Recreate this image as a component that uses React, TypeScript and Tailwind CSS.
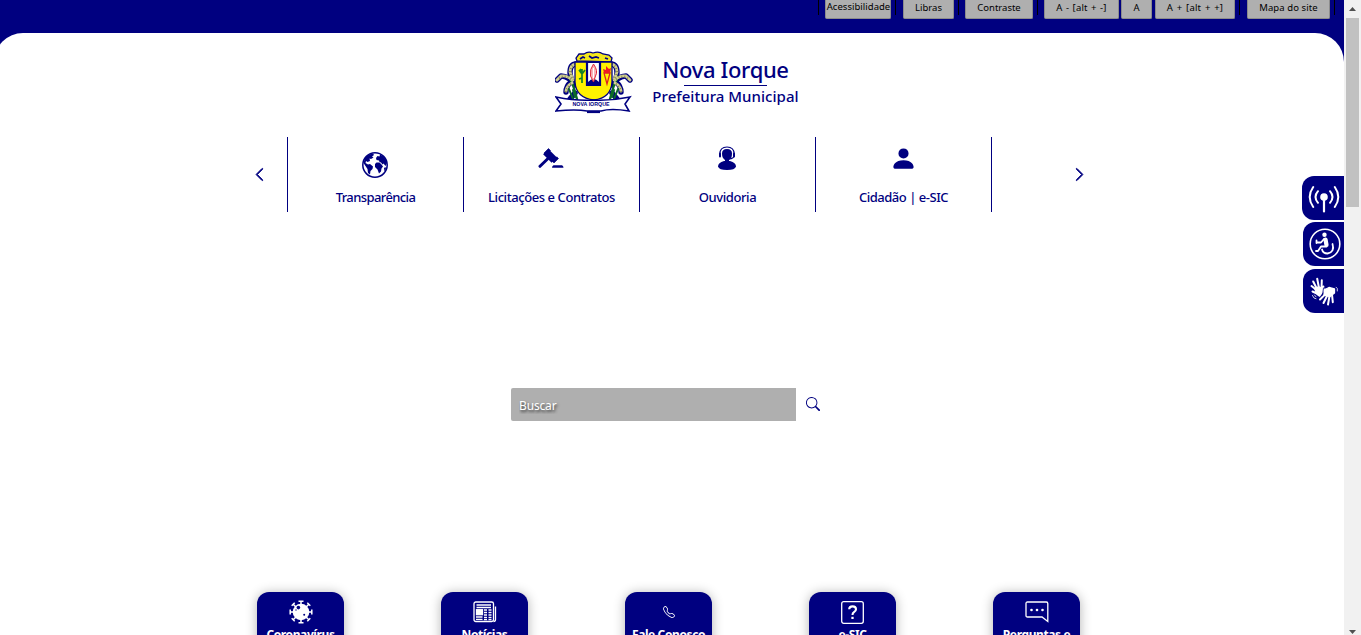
import type { ReactNode } from "react";
import { BsChevronLeft, BsChevronRight, BsPersonFill, BsSearch, BsTelephone } from "react-icons/bs";

function Divider({ className = "" }: { className?: string }) {
  return <span className={`h-[15px] w-px shrink-0 bg-black ${className}`} />;
}

function TopButton({ className, children }: { className: string; children: ReactNode }) {
  return (
    <button
      className={`flex h-[19px] shrink-0 justify-center whitespace-nowrap rounded-b-[2px] border border-t-0 border-[#8c8c8c] bg-[#afafaf] text-[9.5px] leading-[14px] text-black ${className}`}
    >
      {children}
    </button>
  );
}

function CornStalk() {
  return (
    <g strokeLinecap="round" strokeLinejoin="round" fill="none">
      <path d="M21 13Q15 13 15 22Q16 30 20 34M20 34Q14 25 6 25L2 29M16 31Q11 35 11 41M20 42L15 48" stroke="#000080" strokeWidth="5.4" />
      <path d="M14 26L18 34L22 48" stroke="#0c6b26" strokeWidth="2.4" />
      <path d="M21 13Q15 14 15 21L18 29M17 29Q12 24 6 25L2 29M17 32Q12 34 11 40" stroke="#d0cf91" strokeWidth="2.9" />
      <path d="M20 13Q16 15 15 21L18 29M16 28Q11 24 4 27M16 33Q12 36 11 41" stroke="#77763f" strokeWidth="2.6" strokeDasharray="0.7 2.3" strokeLinecap="butt" />
      <path d="M14 38L18 48M18 39L20 46" stroke="#0c6b26" strokeWidth="2" />
    </g>
  );
}

function Crest() {
  return (
    <svg width="78" height="64" viewBox="0 0 78 64" className="shrink-0">
      <CornStalk />
      <g transform="translate(77 0) scale(-1 1)">
        <CornStalk />
      </g>
      <path d="M22 10L21 7L24 3L29 3Q33 0 38 2Q44 0 48 3L54 4L57 7L56 11Z" fill="#f2e61c" stroke="#000080" strokeWidth="1.3" />
      <path d="M25 8l3-2 2 1M34 5l3 2 4-1 3 1M50 7l3 1" fill="none" stroke="#000080" strokeWidth="1.7" />
      <path d="M20 11H57V31Q56 47 39 49Q21 47 20 31Z" fill="#fff200" stroke="#000080" strokeWidth="1.3" />
      <path d="M32 11H45V34H32Z" fill="#fff" stroke="#000080" strokeWidth="2.2" />
      <path d="M33 31Q38.500 25 44 31V34H33Z" fill="#000080" />
      <path d="M38.500 13q5 7 2 12l-2 6-3-6q-1-7 3-12Z" fill="#f8b4b8" stroke="#e0283c" strokeWidth="1" />
      <path d="M38.500 17v10" stroke="#fff" />
      <path d="M27 18v14M27 23l-3-4M27 23l3-4M27 21l-2-3M27 27l-3 1" stroke="#168326" strokeWidth="1.7" />
      <path d="M49 22h6l-3 11Z" fill="#fff200" stroke="#d22" strokeWidth="1.3" />
      <path d="M49 22l-1-4 3 1 0-4 3 3 2-1-1 5Z" fill="#ed1c24" />
      <path d="M1 46Q21 50 38 49Q56 50 75 46L70 53L74 60Q56 57 46 60H32Q21 58 1 60L6 53Z" fill="#fff" stroke="#000080" strokeWidth="1.6" />
      <path d="M32 61h13" stroke="#000080" strokeWidth="2.2" />
      <text x="36" y="55" textAnchor="middle" fontFamily="Liberation Sans, sans-serif" fontSize="5.500" fontWeight="700" fill="#000080" textLength="37" lengthAdjust="spacingAndGlyphs">NOVA IORQUE</text>
    </svg>
  );
}

function GlobeIcon() {
  return (
    <svg width="28" height="28" viewBox="0 0 28 28" fill="#000080">
      <circle cx="14" cy="14" r="12.200" fill="none" stroke="#000080" strokeWidth="1.500" />
      <path d="M4 7Q7 3 12 2.500L13 4 11 5.500 12.500 6.500 10 8 8.500 7.500 9 10 6.500 11 5 10 4.500 12 7 13.500 9 13 12 15.500 11.500 18 9.500 20 9 23.500 7 22 6.500 18 4.500 15 2.500 12Z" />
      <path d="M15 7L16.500 5 18.500 5.500 19 3.500Q25 6 26 12L24.500 15 22.500 12.500 21.500 13.500 20 11.500 18.500 11 18 9.500 15.500 9Z" />
      <path d="M15.500 11.500L18.500 11.500 20.500 13.500 22 15.500 20.500 17.500 20 20.500 18 22.500 16.500 18.500 14 16 14 13Z" />
      <path d="M23 17l1.500-1 .5 2-1.500 2.500Z" />
    </svg>
  );
}

function GavelIcon() {
  return (
    <svg width="26" height="22" viewBox="0 0 26 22" fill="#000080">
      <rect x="6" y="4.2" width="12" height="7.4" transform="rotate(45 12 7.9)" />
      <path d="M10.5 .5L6 5L8 7L12.5 2.5ZM18.8 8.8L14.3 13.3L16 15L20.5 10.5Z" stroke="#000080" strokeWidth=".6" strokeLinejoin="round" />
      <path d="M9.5 11L2 18.3" stroke="#000080" strokeWidth="3" strokeLinecap="round" />
      <path d="M15.5 17.2h8.5q1.5 .5 1.5 2.5H14q0-2 1.5-2.5Z" />
    </svg>
  );
}

function AgentIcon() {
  return (
    <svg width="20" height="24" viewBox="0 0 20 24" fill="#000080">
      <path d="M5 7.5Q5 3 10 3T15 7.5Q15 12.5 12 14V17H8V14Q5 12 5 7.5Z" />
      <path d="M2.8 8Q3 1 10 1T17.2 8V9.5Q17 12.6 12 13" fill="none" stroke="#000080" strokeWidth="1.2" />
      <rect x="2" y="6.5" width="2" height="5" rx="1" />
      <rect x="16" y="6.5" width="2" height="5" rx="1" />
      <path d="M7 15h6q6 1.5 6 5.5Q18 24 10 24T1 20.5Q1 16.500 7 15Z" />
    </svg>
  );
}

function BroadcastIcon() {
  return (
    <svg width="32" height="30" viewBox="0 0 32 30" fill="none" stroke="white" strokeWidth="2" strokeLinecap="round">
      <circle cx="16" cy="13" r="3.8" fill="white" stroke="none" />
      <path d="M16 14v13.5" strokeWidth="2.2" />
      <path d="M10 7.2q-5 5.8 0 11.6M22 7.2q5 5.8 0 11.6M5.2 3q-7 10 0 20M26.8 3q7 10 0 20" />
    </svg>
  );
}

function WheelchairIcon() {
  return (
    <svg width="32" height="32" viewBox="0 0 32 32" fill="none" stroke="white" strokeLinecap="round" strokeLinejoin="round">
      <circle cx="16" cy="16" r="14.8" strokeWidth="1.6" />
      <circle cx="15.5" cy="6.8" r="2.2" fill="white" stroke="none" />
      <path d="M16.5 11.5L17.5 17" strokeWidth="4.2" />
      <path d="M15 11L12 14.5H7.5M7.5 12.5v2.5M17.5 18.5L12 18.5L9 23H7" strokeWidth="1.8" />
      <path d="M23.5 16Q26 24 18.5 25.5Q14 25.5 13 21.5" strokeWidth="1.8" />
    </svg>
  );
}

function SignHandsIcon() {
  return (
    <svg width="29" height="29" viewBox="0 0 29 29" fill="none" stroke="white" strokeLinecap="round" strokeLinejoin="round">
      <path d="M5 12L8 10L12 11L13 14L9.5 19Q7 18 6 15Z" fill="white" strokeWidth="1.5" />
      <path d="M6.500 13L1.500 9M7 12L3.200 4.500M9 11L7.200 1.800M11.500 12L11.800 3.200M12.200 14.500L13.400 9.500M8 17L2.500 14.500" strokeWidth="2" />
      <path d="M14 13L19 10.500L24.500 12V16L20 19.500L14 18Z" fill="white" strokeWidth="1.3" />
      <path d="M15 12.500L10.500 13.300M15.500 17L10 22.500M17 19L13.500 26M19.500 19L18 27.500M22 17.500L22.800 25.200" strokeWidth="2" />
      <path d="M2.500 18.500l1.500 2.500 2 .7M4.500 18l1.500 1.800M26 10.200l1.300 1.300v2.500" strokeWidth=".8" />
      <path d="M13.500 11L12.500 18" stroke="#000080" strokeWidth=".8" />
    </svg>
  );
}

function VirusIcon() {
  return (
    <svg width="24" height="24" viewBox="0 0 24 24" fill="none" stroke="white" strokeWidth="1.5">
      <circle cx="12" cy="12" r="8.3" fill="white" stroke="none" />
      <path d="M12 1v22M9.5 1.2h5M9.5 22.8h5M1 12h22M1.2 9.5v5M22.8 9.5v5" />
      <path d="M4.2 4.2l15.6 15.6M2.7 5.8l3-3M18.3 21.3l3-3M19.8 4.2L4.2 19.8M18.3 2.7l3 3M2.7 18.3l3 3" />
      <circle cx="9.4" cy="7.6" r="1.8" fill="#000080" stroke="none" />
      <circle cx="7" cy="10" r=".7" fill="#000080" stroke="none" />
      <circle cx="15.2" cy="14.8" r="1" fill="#000080" stroke="none" />
    </svg>
  );
}

function NewsIcon() {
  return (
    <svg width="24" height="22" viewBox="0 0 24 22" fill="none" stroke="white" strokeWidth="1.3">
      <rect x="1" y="1" width="19.5" height="19.5" rx="1.8" />
      <path d="M22.5 5.5v13q0 2-2 2M3.5 4h14.5M3.5 6.5h14.5" />
      <rect x="3.5" y="8.7" width="6" height="5" fill="white" />
      <path d="M11 9h3M15.5 9h3M11 11.5h3M15.5 11.5h3M11 14h3M15.5 14h3M3 16h6.5M11 16.3h3M15.5 16.3h3M3 18.3h6.5M11 18.5h3M15.5 18.5h3" />
    </svg>
  );
}

function QuestionIcon() {
  return (
    <svg width="23" height="23" viewBox="0 0 23 23" fill="none" stroke="white">
      <rect x=".7" y=".7" width="21.6" height="21.6" rx="2" strokeWidth="1.3" />
      <path d="M8.2 8.3Q8.2 5.4 11.6 5.4Q15 5.4 15 8.3Q15 10 13 11.2Q11.5 12.2 11.5 14" strokeWidth="2.1" />
      <path d="M11.5 15.8v2.2" strokeWidth="2.3" />
    </svg>
  );
}

function ChatIcon() {
  return (
    <svg width="24" height="22" viewBox="0 0 24 22" fill="none" stroke="white" strokeWidth="1.3">
      <path d="M2.5 1h18.8Q22.8 1 22.8 2.5v18L17 16H2.5Q1 16 1 14.5v-12Q1 1 2.5 1Z" />
      <g fill="white" stroke="none">
        <circle cx="6.5" cy="9" r="1.3" />
        <circle cx="12" cy="9" r="1.3" />
        <circle cx="17.5" cy="9" r="1.3" />
      </g>
    </svg>
  );
}

const services = [
  { label: "Transparência", icon: <GlobeIcon />, pad: "pt-[14px]", tracking: "tracking-[-0.6px]" },
  { label: "Licitações e Contratos", icon: <GavelIcon />, pad: "pt-[11px]", tracking: "tracking-[-0.43px]" },
  { label: "Ouvidoria", icon: <AgentIcon />, pad: "pt-[9px]", tracking: "tracking-[-0.42px]" },
  { label: "Cidadão | e-SIC", icon: <BsPersonFill size={27} />, pad: "pt-[8px]", tracking: "tracking-[-0.47px]" },
];

const cards = [
  { label: "Coronavírus", icon: <VirusIcon /> },
  { label: "Notícias", icon: <NewsIcon /> },
  { label: "Fale Conosco", icon: <BsTelephone size={12} /> },
  { label: "e-SIC", icon: <QuestionIcon /> },
  { label: "Perguntas e", icon: <ChatIcon /> },
];

export default function App() {
  return (
    <div className="relative flex h-[635px] w-[1361px] overflow-hidden bg-[#000080] font-['Noto_Sans','Open_Sans',sans-serif] text-[#000080]">
      <div className="w-[1344px] shrink-0">
        <header className="flex h-[33px] items-start pl-[818px]">
          <Divider />
          <TopButton className="ml-[6px] w-[66px] pl-px leading-[10px] tracking-[0.03px]">Acessibilidade</TopButton>
          <Divider className="ml-[4px]" />
          <TopButton className="ml-[7px] w-[51px] pt-px">Libras</TopButton>
          <Divider className="ml-[4px]" />
          <TopButton className="ml-[6px] w-[68px] pt-px">Contraste</TopButton>
          <Divider className="ml-[4px]" />
          <TopButton className="ml-[6px] w-[75px] pt-px tracking-[0.2px] [word-spacing:0.7px]">A - [alt + -]</TopButton>
          <TopButton className="ml-[2px] w-[31px] pt-px">A</TopButton>
          <TopButton className="ml-[3px] w-[80px] pt-px tracking-[0.2px] [word-spacing:1px]">A + [alt + +]</TopButton>
          <Divider className="ml-[4px]" />
          <TopButton className="ml-[7px] w-[83px] pt-px tracking-[0.1px]">Mapa do site</TopButton>
          <Divider className="ml-[4px]" />
        </header>

        <main className="-ml-[6px] h-[602px] rounded-t-[29px] bg-white pl-[6px]">
          <div className="flex h-[104px] pl-[555px] pt-[18px]">
            <Crest />
            <div className="ml-[18px] flex w-[149px] flex-col items-center pt-[4px]">
              <h1 className="-mt-px h-[31px] whitespace-nowrap text-[22px] font-medium leading-[30px] tracking-[-0.35px]">Nova Iorque</h1>
              <div className="h-px w-[83px] shrink-0 bg-[#000080]" />
              <h2 className="-mt-px whitespace-nowrap text-[15px] font-medium leading-[22px] tracking-[0.04px]">Prefeitura Municipal</h2>
            </div>
          </div>

          <nav className="flex h-[75px]">
            <button className="flex w-[287px] items-center justify-end pr-[20px]">
              <BsChevronLeft size={15} strokeWidth={1} />
            </button>
            {services.map((s) => (
              <a key={s.label} className={`flex h-[75px] w-[176px] flex-col items-center border-l border-[#000080] ${s.pad}`}>
                <div className="flex flex-1 items-start pr-px">{s.icon}</div>
                <span className={`mb-[5px] whitespace-nowrap text-[13px] font-medium leading-[19px] ${s.tracking}`}>{s.label}</span>
              </a>
            ))}
            <button className="flex w-[100px] items-center justify-end border-l border-[#000080] pr-[4px]">
              <BsChevronRight size={15} strokeWidth={1} />
            </button>
          </nav>

          <div className="mt-[176px] flex h-[33px] items-center pl-[511px]">
            <input
              className="h-[33px] w-[285px] rounded-l-[2px] bg-[#afafaf] px-[8px] pt-[2px] text-[12px] tracking-[-0.15px] text-white outline-none [text-shadow:1px_2px_3px_#333] placeholder:text-white"
              placeholder="Buscar"
            />
            <button className="ml-[10px] pb-px">
              <BsSearch size={14} />
            </button>
          </div>

          <div className="mt-[171px] flex gap-[97px] pl-[257px]">
            {cards.map((c) => (
              <a key={c.label} className="flex h-[87px] w-[87px] flex-col items-center rounded-[12px] bg-[#000080] text-white shadow-[0_1px_12px_rgba(0,0,0,.3)]">
                <div className="flex h-[40px] w-full shrink-0 items-center justify-center">{c.icon}</div>
                <span className="-mt-[6px] whitespace-nowrap text-[12px] font-bold leading-[17px] tracking-[-0.4px]">{c.label}</span>
              </a>
            ))}
          </div>
        </main>
      </div>

      <aside className="absolute left-[1302px] top-[176px] flex w-[42px] flex-col items-end">
        <a className="flex h-[44px] w-[42px] items-center justify-center rounded-l-[12px] bg-[#000080] pl-[2px] pt-[2px]">
          <BroadcastIcon />
        </a>
        <a className="mt-[2px] flex h-[44px] w-[41px] items-center justify-center rounded-l-[12px] bg-[#000080] pl-[2px]">
          <WheelchairIcon />
        </a>
        <a className="mt-[3px] flex h-[44px] w-[41px] items-center justify-center rounded-l-[12px] bg-[#000080] pl-[2px]">
          <SignHandsIcon />
        </a>
      </aside>

      <div className="flex h-[635px] w-[17px] shrink-0 flex-col items-center bg-[#f1f1f1]">
        <svg width="17" height="18" viewBox="0 0 17 18" className="shrink-0">
          <path d="M5 11h7L8.5 7Z" fill="#505050" />
        </svg>
        <div className="h-[189px] w-[13px] shrink-0 bg-[#c1c1c1]" />
        <svg width="17" height="17" viewBox="0 0 17 17" className="mt-auto shrink-0">
          <path d="M5 12h7L8.5 16Z" fill="#505050" />
        </svg>
      </div>
    </div>
  );
}
